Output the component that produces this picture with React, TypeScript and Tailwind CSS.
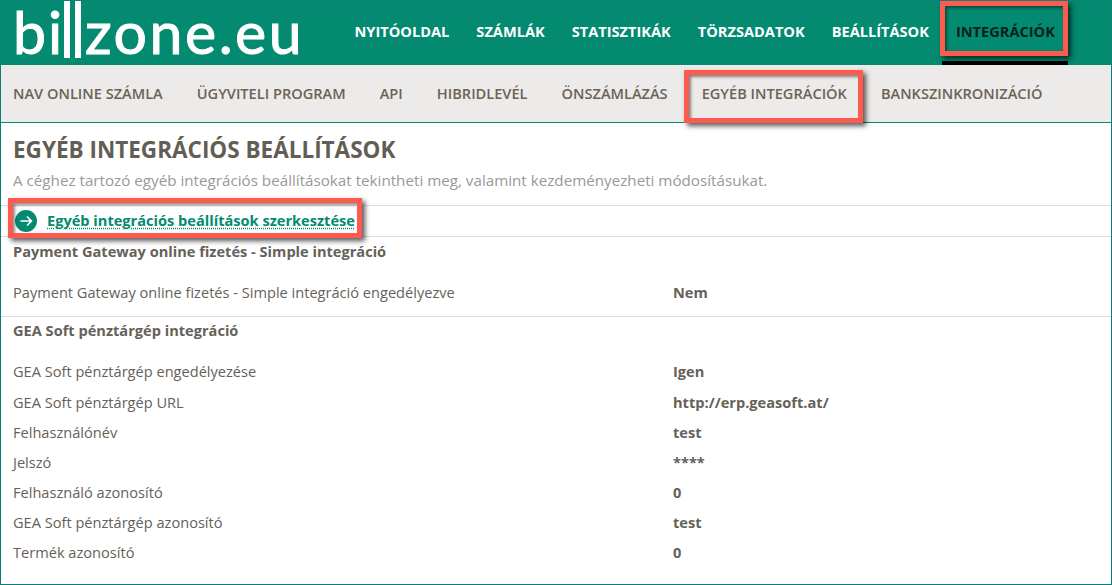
const mainNav = ["NYITÓOLDAL", "SZÁMLÁK", "STATISZTIKÁK", "TÖRZSADATOK", "BEÁLLÍTÁSOK"];
const subNav = ["NAV ONLINE SZÁMLA", "ÜGYVITELI PROGRAM", "API", "HIBRIDLEVÉL", "ÖNSZÁMLÁZÁS"];

const geaRows = [
  ["GEA Soft pénztárgép engedélyezése", "Igen"],
  ["GEA Soft pénztárgép URL", "http://erp.geasoft.at/"],
  ["Felhasználónév", "test"],
  ["Jelszó", "****"],
  ["Felhasználó azonosító", "0"],
  ["GEA Soft pénztárgép azonosító", "test"],
  ["Termék azonosító", "0"],
];

const Marker = ({ className }: { className: string }) => (
  <span
    className={`absolute border-[5px] border-[#ff5a50] shadow-[3px_3px_5px_rgba(0,0,0,0.65),inset_2px_2px_3px_rgba(0,0,0,0.45)] pointer-events-none ${className}`}
  />
);

const Row = ({ label, value, className }: { label: string; value: string; className?: string }) => (
  <div className={`flex items-center ${className ?? "h-[30px]"}`}>
    <div className="w-[660px] shrink-0">{label}</div>
    <div className="font-bold">{value}</div>
  </div>
);

const Logo = () => (
  <div className="flex items-start h-[64px] text-white font-['Lato',sans-serif] font-normal text-[59px] leading-[62px] [-webkit-text-stroke:1px_white]">
    <span className="w-[51px] shrink-0 -ml-[2px] tracking-[2px]">bi</span>
    <span className="w-[6px] h-[57px] shrink-0 bg-white" />
    <span className="w-[6px] h-[57px] shrink-0 bg-white ml-[5px]" />
    <span className="ml-[4px] tracking-[2.5px]">zone.eu</span>
  </div>
);

export default function App() {
  return (
    <div className="w-[1112px] h-[585px] overflow-hidden bg-white border border-[#0b7f78] font-['Open_Sans',sans-serif] text-[14.6px] text-[#666159]">
      <header className="flex h-[64px] bg-[#038a70]">
        <div className="pl-[14px] w-[340px] shrink-0">
          <Logo />
        </div>
        <nav className="flex items-start font-bold text-white">
          {mainNav.map((item) => (
            <a key={item} className="px-[13.5px] pt-[21px] leading-[19px]">
              {item}
            </a>
          ))}
          <a className="relative px-[13.5px] pt-[21px] h-[64px] leading-[19px] text-[#07211c] border-b-4 border-black">
            INTEGRÁCIÓK
            <Marker className="left-[-2px] top-0 w-[128px] h-[55px]" />
          </a>
        </nav>
      </header>

      <nav className="flex items-stretch h-[58px] pl-[12px] bg-[#ecebe9] border-b border-[#038a70] font-semibold text-[#6b6256]">
        {subNav.map((item) => (
          <a key={item} className="flex items-center mr-[34px]">
            {item}
          </a>
        ))}
        <a className="relative flex items-center mr-[34px]">
          EGYÉB INTEGRÁCIÓK
          <Marker className="left-[-18px] top-[5px] w-[179px] h-[53px]" />
        </a>
        <a className="flex items-center">BANKSZINKRONIZÁCIÓ</a>
      </nav>

      <main>
        <div className="px-[12px] pt-[11px] h-[82px]">
          <h1 className="text-[22.5px] leading-[32px] font-bold text-[#635e54]">EGYÉB INTEGRÁCIÓS BEÁLLÍTÁSOK</h1>
          <p className="mt-[4px] text-[15.2px] leading-[20px] text-[#999]">
            A céghez tartozó egyéb integrációs beállításokat tekintheti meg, valamint kezdeményezheti módosításukat.
          </p>
        </div>

        <div className="relative flex items-center h-[32px] pl-[14px] border-y border-[#ddd]">
          <span className="flex items-center justify-center w-[22px] h-[22px] rounded-full bg-[#038a70] text-white">
            <svg width="14" height="14" viewBox="0 0 14 14" fill="none" stroke="currentColor" strokeWidth="1.6">
              <path d="M1.5 7h11M8 2.5 12.5 7 8 11.5" />
            </svg>
          </span>
          <a className="ml-[10px] font-bold text-[#038a70] underline decoration-dotted underline-offset-2">
            Egyéb integrációs beállítások szerkesztése
          </a>
          <Marker className="left-[7px] top-[-8px] w-[354px] h-[40px]" />
        </div>

        <section className="px-[12px] border-b border-[#ddd] h-[80px]">
          <h2 className="font-bold leading-[28px]">Payment Gateway online fizetés - Simple integráció</h2>
          <Row label="Payment Gateway online fizetés - Simple integráció engedélyezve" value="Nem" className="h-[30px] mt-[13px]" />
        </section>

        <section className="px-[12px]">
          <h2 className="font-bold leading-[26px]">GEA Soft pénztárgép integráció</h2>
          <div className="mt-[14px]">
            {geaRows.map(([label, value], i) => (
              <Row key={label} label={label} value={value} className={i === 0 ? "h-[31px] pb-[1px]" : "h-[30px]"} />
            ))}
          </div>
        </section>
      </main>
    </div>
  );
}
